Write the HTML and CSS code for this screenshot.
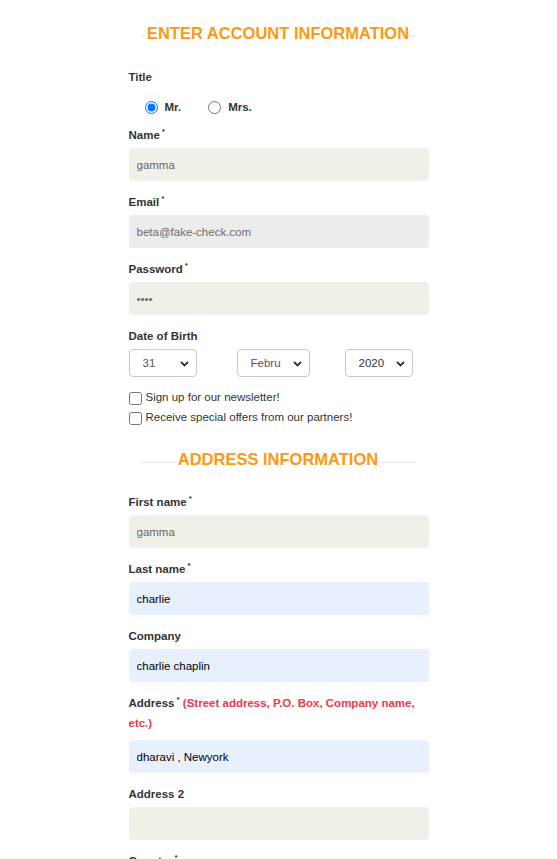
FILE: index.html
```html
<!DOCTYPE html>
<html lang="en">
<head>
<meta charset="utf-8">
<title>Signup</title>
<link rel="stylesheet" href="styles.css">
</head>
<body>
<form class="signup">
  <h2 class="section-title"><span>ENTER ACCOUNT INFORMATION</span></h2>

  <label class="field-label">Title</label>
  <div class="radio-row">
    <label class="radio-opt"><input type="radio" name="title" checked> <span>Mr.</span></label>
    <label class="radio-opt"><input type="radio" name="title"> <span>Mrs.</span></label>
  </div>

  <label class="field-label">Name<sup>*</sup></label>
  <input class="text-input" type="text" value="gamma">

  <label class="field-label">Email<sup>*</sup></label>
  <input class="text-input is-disabled" type="text" value="beta@fake-check.com" disabled>

  <label class="field-label">Password<sup>*</sup></label>
  <input class="text-input" type="password" value="abcd">

  <label class="field-label">Date of Birth</label>
  <div class="dob-row">
    <div class="dob-col">
      <div class="select-wrap">
        <select class="dob-select dob-day"><option>31</option></select>
        <svg class="chevron" width="9" height="6" viewBox="0 0 9 6"><path d="M1 1 L4.5 4.5 L8 1" fill="none" stroke="#333" stroke-width="1.8"/></svg>
      </div>
    </div>
    <div class="dob-col">
      <div class="select-wrap">
        <select class="dob-select dob-month"><option>February</option></select>
        <svg class="chevron" width="9" height="6" viewBox="0 0 9 6"><path d="M1 1 L4.5 4.5 L8 1" fill="none" stroke="#333" stroke-width="1.8"/></svg>
      </div>
    </div>
    <div class="dob-col dob-col--last">
      <div class="select-wrap">
        <select class="dob-select dob-year"><option>2020</option></select>
        <svg class="chevron" width="9" height="6" viewBox="0 0 9 6"><path d="M1 1 L4.5 4.5 L8 1" fill="none" stroke="#333" stroke-width="1.8"/></svg>
      </div>
    </div>
  </div>

  <label class="check-row"><input type="checkbox"> <span>Sign up for our newsletter!</span></label>
  <label class="check-row"><input type="checkbox"> <span>Receive special offers from our partners!</span></label>

  <h2 class="section-title section-title--address"><span>ADDRESS INFORMATION</span></h2>

  <label class="field-label">First name<sup>*</sup></label>
  <input class="text-input" type="text" value="gamma">

  <label class="field-label">Last name<sup>*</sup></label>
  <input class="text-input is-filled" type="text" value="charlie">

  <label class="field-label">Company</label>
  <input class="text-input is-filled" type="text" value="charlie chaplin">

  <label class="field-label field-label--wrap">Address<sup>*</sup> <span class="hint">(Street address, P.O. Box, Company name, etc.)</span></label>
  <input class="text-input is-filled" type="text" value="dharavi , Newyork">

  <label class="field-label">Address 2</label>
  <input class="text-input" type="text" value="">

  <label class="field-label">Country<sup>*</sup></label>
  <select class="text-input country"><option>India</option></select>
</form>
</body>
</html>
```

FILE: styles.css
```css
html {
  scrollbar-width: none;
}

body {
  margin: 0;
  background: #ffffff;
  font-family: "Liberation Sans", Arial, sans-serif;
  color: #333333;
}

.signup {
  width: 300px;
  margin: 0 auto;
  padding-top: 24px;
  display: flex;
  flex-direction: column;
}

.section-title {
  margin: 0 13px 24px 12px;
  font-size: 16.5px;
  line-height: 19px;
  font-weight: bold;
  color: #fe980f;
  text-align: center;
  background: linear-gradient(to bottom, transparent 11px, #f1f1f1 11px, #f1f1f1 13px, transparent 13px);
}

.section-title span {
  background: #ffffff;
}

.section-title--address {
  margin-top: 23px;
  margin-bottom: 23px;
}

.field-label {
  display: block;
  font-size: 11.5px;
  line-height: 20px;
  font-weight: bold;
  color: #333333;
  margin-bottom: 3px;
}

.field-label sup {
  font-size: 8px;
  line-height: 0;
  vertical-align: 5px;
  margin-left: 2px;
}

.field-label--wrap {
  margin-bottom: 7px;
}

.hint {
  color: #f2354c;
}

.radio-row {
  display: flex;
  align-items: center;
  height: 20px;
  margin: 7px 0 8px 16px;
}

.radio-opt {
  display: flex;
  align-items: center;
  font-size: 11.5px;
  font-weight: bold;
  color: #333333;
  margin-right: 27px;
}

.radio-opt input {
  margin: 1px 7px 0 0;
  width: 13px;
  height: 13px;
}

.text-input {
  box-sizing: border-box;
  width: 300px;
  height: 33px;
  margin: 0 0 11px 0;
  padding: 0 8px;
  border: 0;
  border-radius: 4px;
  background: #f0f0e9;
  color: #696763;
  font-family: "Liberation Sans", Arial, sans-serif;
  font-size: 11.5px;
  outline: none;
}

.text-input.is-disabled {
  background: #ececec;
  color: #6b6b6b;
}

.text-input.is-filled {
  background: #e8f0fe;
  color: #000000;
}

.dob-row {
  display: flex;
  margin-bottom: 10px;
}

.dob-col {
  flex: none;
  width: 108px;
}

.dob-col--last {
  width: 84px;
}

.select-wrap {
  position: relative;
  display: inline-block;
  vertical-align: top;
}

.dob-select {
  -webkit-appearance: none;
  appearance: none;
  display: block;
  box-sizing: border-box;
  height: 28px;
  padding: 0 28px 0 13px;
  border: 1px solid #c8c8c8;
  border-radius: 4px;
  background: #ffffff;
  color: #555555;
  font-family: "Liberation Sans", Arial, sans-serif;
  font-size: 11.5px;
  outline: none;
}

.dob-day { width: 68px; }
.dob-month { width: 73px; }
.dob-year { width: 68px; padding-right: 24px; color: #333344; }

.chevron {
  position: absolute;
  right: 8px;
  top: 12px;
  pointer-events: none;
}

.check-row {
  display: flex;
  align-items: center;
  font-size: 11.5px;
  line-height: 20px;
  color: #333333;
}

.check-row input {
  margin: 3px 4px 0 0;
  width: 13px;
  height: 13px;
}

.country {
  background: #f0f0e9;
}
```
